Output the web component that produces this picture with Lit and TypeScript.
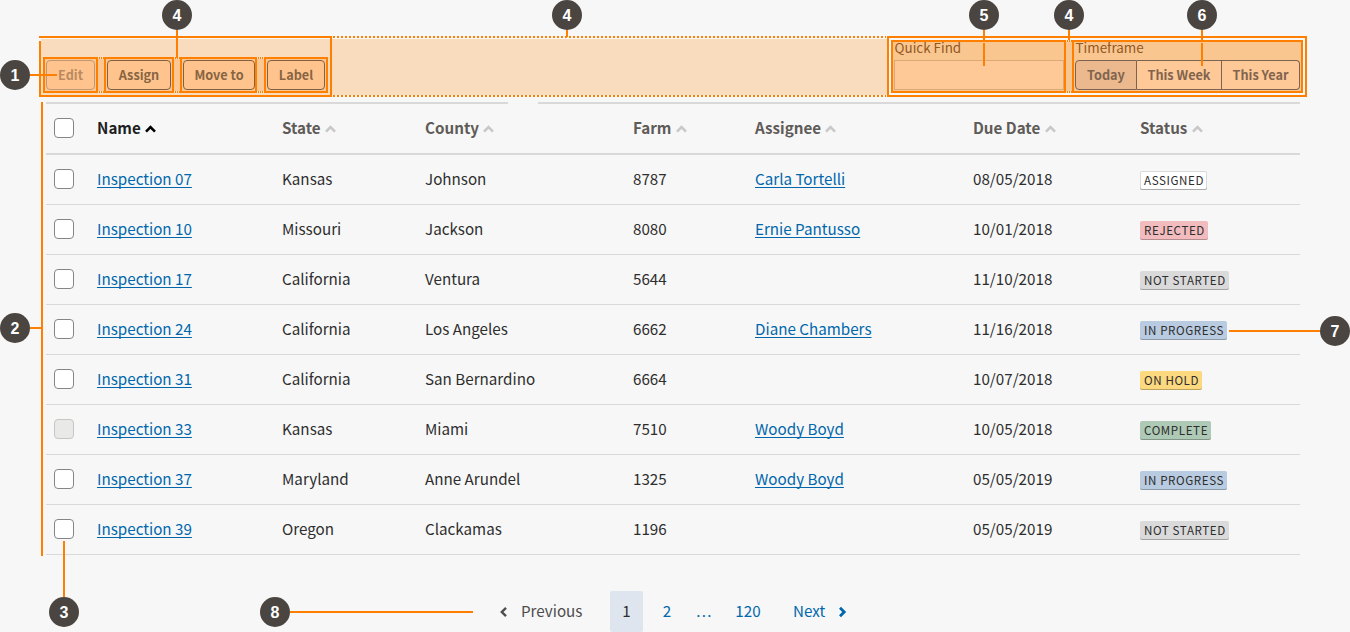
import { LitElement, html, css, svg, nothing } from "lit";
import { customElement } from "lit/decorators.js";
import { classMap } from "lit/directives/class-map.js";

interface Inspection {
  name: string;
  state: string;
  county: string;
  farm: string;
  assignee: string;
  due: string;
  status: string;
  disabled?: boolean;
}

const ROWS: Inspection[] = [
  { name: "Inspection 07", state: "Kansas", county: "Johnson", farm: "8787", assignee: "Carla Tortelli", due: "08/05/2018", status: "Assigned" },
  { name: "Inspection 10", state: "Missouri", county: "Jackson", farm: "8080", assignee: "Ernie Pantusso", due: "10/01/2018", status: "Rejected" },
  { name: "Inspection 17", state: "California", county: "Ventura", farm: "5644", assignee: "", due: "11/10/2018", status: "Not started" },
  { name: "Inspection 24", state: "California", county: "Los Angeles", farm: "6662", assignee: "Diane Chambers", due: "11/16/2018", status: "In progress" },
  { name: "Inspection 31", state: "California", county: "San Bernardino", farm: "6664", assignee: "", due: "10/07/2018", status: "On hold" },
  { name: "Inspection 33", state: "Kansas", county: "Miami", farm: "7510", assignee: "Woody Boyd", due: "10/05/2018", status: "Complete", disabled: true },
  { name: "Inspection 37", state: "Maryland", county: "Anne Arundel", farm: "1325", assignee: "Woody Boyd", due: "05/05/2019", status: "In progress" },
  { name: "Inspection 39", state: "Oregon", county: "Clackamas", farm: "1196", assignee: "", due: "05/05/2019", status: "Not started" },
];

const COLUMNS = ["Name", "State", "County", "Farm", "Assignee", "Due Date", "Status"];

// Callout discs: label and centre.
const PINS: [string, number, number][] = [
  ["4", 177, 15], ["4", 567, 15], ["5", 984, 15], ["4", 1069, 15], ["6", 1202, 15],
  ["1", 15, 75], ["2", 15, 328], ["3", 64, 612], ["8", 275, 612], ["7", 1335, 331],
];

// Connector lines: x, y, width, height.
const LINES: number[][] = [
  [176, 30, 2, 28], [566, 30, 2, 7], [983, 30, 2, 11], [983, 43, 2, 23],
  [1068, 30, 2, 10], [1201, 30, 2, 11], [1201, 43, 2, 23],
  [30, 74, 27, 2], [30, 327, 12, 2], [41, 102, 2, 454],
  [63, 541, 2, 56], [290, 611, 183, 2], [1229, 330, 91, 2],
];

@customElement("app-root")
export class AppRoot extends LitElement {
  static styles = css`
    :host {
      display: block;
      position: relative;
      box-sizing: border-box;
      width: 1350px;
      height: 632px;
      overflow: hidden;
      background: #f7f7f7;
      color: #2e2e2e;
      font: 15.2px/24px "Noto Sans CJK SC", "Noto Sans", sans-serif;
    }
    * { box-sizing: border-box; }
    .toolbar {
      display: flex;
      align-items: flex-end;
      height: 102px;
      padding: 0 50px 12px 46px;
    }
    .actions { display: flex; flex: 1; gap: 12px; }
    .btn {
      height: 30px;
      border: 1px solid #80603f;
      border-radius: 4px;
      background: #ffc48d;
      color: #876443;
      font: 700 12.7px/28px "Noto Sans CJK SC", "Noto Sans", sans-serif;
      text-align: center;
      padding: 0;
    }
    .edit { width: 49px; border-color: #c19772; color: #b98a61; }
    .assign { width: 64px; }
    .move { width: 72px; }
    .label { width: 58px; }
    .find { width: 170px; margin-right: 11px; }
    .caption {
      font-size: 13.4px;
      line-height: 18px;
      height: 22px;
      color: #91571f;
      padding-left: 0.6px;
    }
    .find, .frame { position: relative; z-index: 1; }
    .input { height: 30px; border: 1px solid #dba877; background: #ffc897; }
    .segments { display: flex; width: 225px; }
    .seg { border-color: #7b6251; color: #80644e; background: #ffc897; }
    .seg + .seg { border-left: 0; }
    .today { width: 62px; border-radius: 4px 0 0 4px; background: #ebb98d; }
    .week { width: 85px; border-radius: 0; }
    .year { width: 78px; border-radius: 0 4px 4px 0; }
    .table { padding: 0 50px 0 46px; }
    .row {
      display: grid;
      grid-template-columns: 51px 185px 143px 208px 122px 218px 167px 1fr;
      align-items: center;
      height: 50px;
      border-bottom: 1px solid #d9d9d9;
    }
    .text { padding-bottom: 4px; }
    .rules { display: flex; gap: 30px; height: 2px; }
    .rule { width: 462px; background: #d9d9d9; }
    .rule.rest { width: auto; flex: 1; }
    .head { height: 51px; border-bottom-width: 2px; font-weight: 700; color: #5f5b58; }
    .head .cell { display: flex; align-items: center; gap: 4.3px; padding-bottom: 3px; }
    .head .sorted { color: #1f1f1f; }
    .arrow { width: 11px; height: 8px; margin-top: 3px; color: #c8c8c8; }
    .sorted .arrow { color: #000; }
    .box {
      width: 20px;
      height: 20px;
      margin: 0 0 1px 8px;
      border: 1px solid #858585;
      border-radius: 4px;
      background: #fff;
    }
    .box.off { background: #e9e9e7; border-color: #c6c6c4; }
    a {
      color: #0067ac;
      text-decoration: underline;
      text-decoration-thickness: 1px;
      text-underline-offset: 2px;
      text-decoration-skip-ink: none;
    }
    .tag {
      display: block;
      width: max-content;
      height: 19px;
      margin-top: 2px;
      padding: 0 3px 0 4px;
      border-radius: 2px;
      font-size: 11.6px;
      line-height: 18px;
      letter-spacing: 0.6px;
      text-transform: uppercase;
      box-shadow: inset 0 -1px rgba(0, 0, 0, 0.25);
      background: #dadada;
    }
    .assigned { background: #fff; box-shadow: inset 0 -1px #aaa, inset 0 0 0 1px #d9d9d9; }
    .rejected { background: #f2bcbf; }
    .in-progress { background: #b9cbe0; }
    .on-hold { background: #fcd87f; }
    .complete { background: #aec9b5; }
    .pages { display: flex; align-items: center; height: 41px; margin: 36px 0 0 499px; line-height: 41px; }
    .prev, .next { display: flex; align-items: center; }
    .prev { width: 111px; gap: 13px; color: #4d4d4d; }
    .pages > * { height: 41px; padding-bottom: 2px; line-height: 38px; }
    .pages > .prev, .pages > .next { padding-bottom: 3px; }
    .current {
      width: 33px;
      text-align: center;
      border-radius: 2px;
      background: #dfe5ef;
    }
    .page, .next { color: #0067ac; }
    .two { width: 48px; text-align: center; }
    .dots { width: 27px; text-align: center; letter-spacing: 1.2px; }
    .many { width: 60px; text-align: center; }
    .next { margin-left: 15px; gap: 13px; }
    .chev { width: 9px; height: 12px; margin-top: 3px; }
    .overlay { position: absolute; left: 0; top: 0; pointer-events: none; }
    .under { z-index: 0; }
    .over { z-index: 2; }
    .toolbar .btn { position: relative; z-index: 1; }
    .pin-text { font: 700 16px "Liberation Sans", Arial, sans-serif; fill: #fff; text-anchor: middle; }
  `;

  private sortArrow() {
    return html`<svg class="arrow" viewBox="0 0 11 8"><path d="M1 6.7 5.5 2.2 10 6.7" fill="none" stroke="currentColor" stroke-width="2.6" /></svg>`;
  }

  private frame(x: number, y: number, w: number, h: number) {
    return svg`<rect x=${x + 1} y=${y + 1} width=${w - 2} height=${h - 2} fill="none" stroke="#ff8000" stroke-width="2" />`;
  }

  private backdrop() {
    return html`<svg class="overlay under" width="1350" height="100" viewBox="0 0 1350 100" shape-rendering="crispEdges">
      <rect x="41" y="39" width="848" height="56" fill="#f9dbbe" />
      <rect x="43" y="57" width="285" height="36" fill="#fbc794" />
      <rect x="889" y="38" width="416" height="57" fill="#f7f7f7" />
      <rect x="891" y="40" width="412" height="53" fill="#fac690" />
    </svg>`;
  }

  private outlines() {
    const dots = (x1: number, x2: number, y: number, dash = "2 2") =>
      svg`<line x1=${x1} x2=${x2} y1=${y} y2=${y} stroke="#ff8000" stroke-width="2" stroke-dasharray=${dash} />`;
    const fine = (x1: number, x2: number, y: number) =>
      svg`<rect x=${x1} y=${y - 1} width=${x2 - x1} height="2" fill="#fbe3cc" />${dots(x1 + 1, x2, y, "1 1")}`;
    return html`<svg class="overlay over" width="1350" height="632" viewBox="0 0 1350 632">
      <g shape-rendering="crispEdges">
        <path d="M39 37H331V96H40V41" fill="none" stroke="#ff8000" stroke-width="2" />
        ${dots(333, 886, 37)}${dots(333, 886, 96)}
        ${this.frame(43, 57, 55, 36)}${this.frame(104, 57, 70, 36)}
        ${this.frame(180, 57, 77, 36)}${this.frame(264, 57, 64, 36)}
        ${[[98, 104], [174, 180], [257, 264]].map(([a, b]) => svg`${fine(a, b, 58)}${fine(a, b, 92)}`)}
        ${this.frame(887, 36, 420, 61)}${this.frame(891, 40, 175, 53)}${this.frame(1072, 40, 231, 53)}
        ${fine(1066, 1072, 41)}${fine(1066, 1072, 92)}
        ${LINES.map(([x, y, w, h]) => svg`<rect x=${x} y=${y} width=${w} height=${h} fill="#ff8000" />`)}
      </g>
      ${PINS.map(([t, x, y]) => svg`<circle cx=${x} cy=${y} r="15" fill="#4a4540" /><text class="pin-text" x=${x} y=${y + 6}>${t}</text>`)}
    </svg>`;
  }

  render() {
    return html`
      ${this.backdrop()}
      <div class="toolbar">
        <div class="actions">
          <button class="btn edit">Edit</button>
          <button class="btn assign">Assign</button>
          <button class="btn move">Move to</button>
          <button class="btn label">Label</button>
        </div>
        <div class="find"><div class="caption">Quick Find</div><div class="input"></div></div>
        <div class="frame">
          <div class="caption">Timeframe</div>
          <div class="segments">
            <button class="btn seg today">Today</button>
            <button class="btn seg week">This Week</button>
            <button class="btn seg year">This Year</button>
          </div>
        </div>
      </div>
      <div class="table">
        <div class="rules"><div class="rule"></div><div class="rule rest"></div></div>
        <div class="row head">
          <div class="box"></div>
          ${COLUMNS.map((c, i) => html`<div class=${classMap({ cell: true, sorted: i === 0 })}>${c}${this.sortArrow()}</div>`)}
        </div>
        ${ROWS.map((r) => html`<div class="row">
          <div class=${classMap({ box: true, off: !!r.disabled })}></div>
          <div class="text"><a>${r.name}</a></div>
          <div class="text">${r.state}</div>
          <div class="text">${r.county}</div>
          <div class="text">${r.farm}</div>
          <div class="text">${r.assignee ? html`<a>${r.assignee}</a>` : nothing}</div>
          <div class="text">${r.due}</div>
          <div><span class="tag ${r.status.toLowerCase().replace(" ", "-")}">${r.status}</span></div>
        </div>`)}
      </div>
      <div class="pages">
        <div class="prev"><svg class="chev" viewBox="0 0 9 12"><path d="M7 1.8 2.8 6 7 10.2" fill="none" stroke="currentColor" stroke-width="2.4" /></svg>Previous</div>
        <div class="current">1</div>
        <div class="page two">2</div>
        <div class="page dots">...</div>
        <div class="page many">120</div>
        <div class="next">Next<svg class="chev" viewBox="0 0 9 12"><path d="M2 1.8 6.2 6 2 10.2" fill="none" stroke="currentColor" stroke-width="2.8" /></svg></div>
      </div>
      ${this.outlines()}
    `;
  }
}
